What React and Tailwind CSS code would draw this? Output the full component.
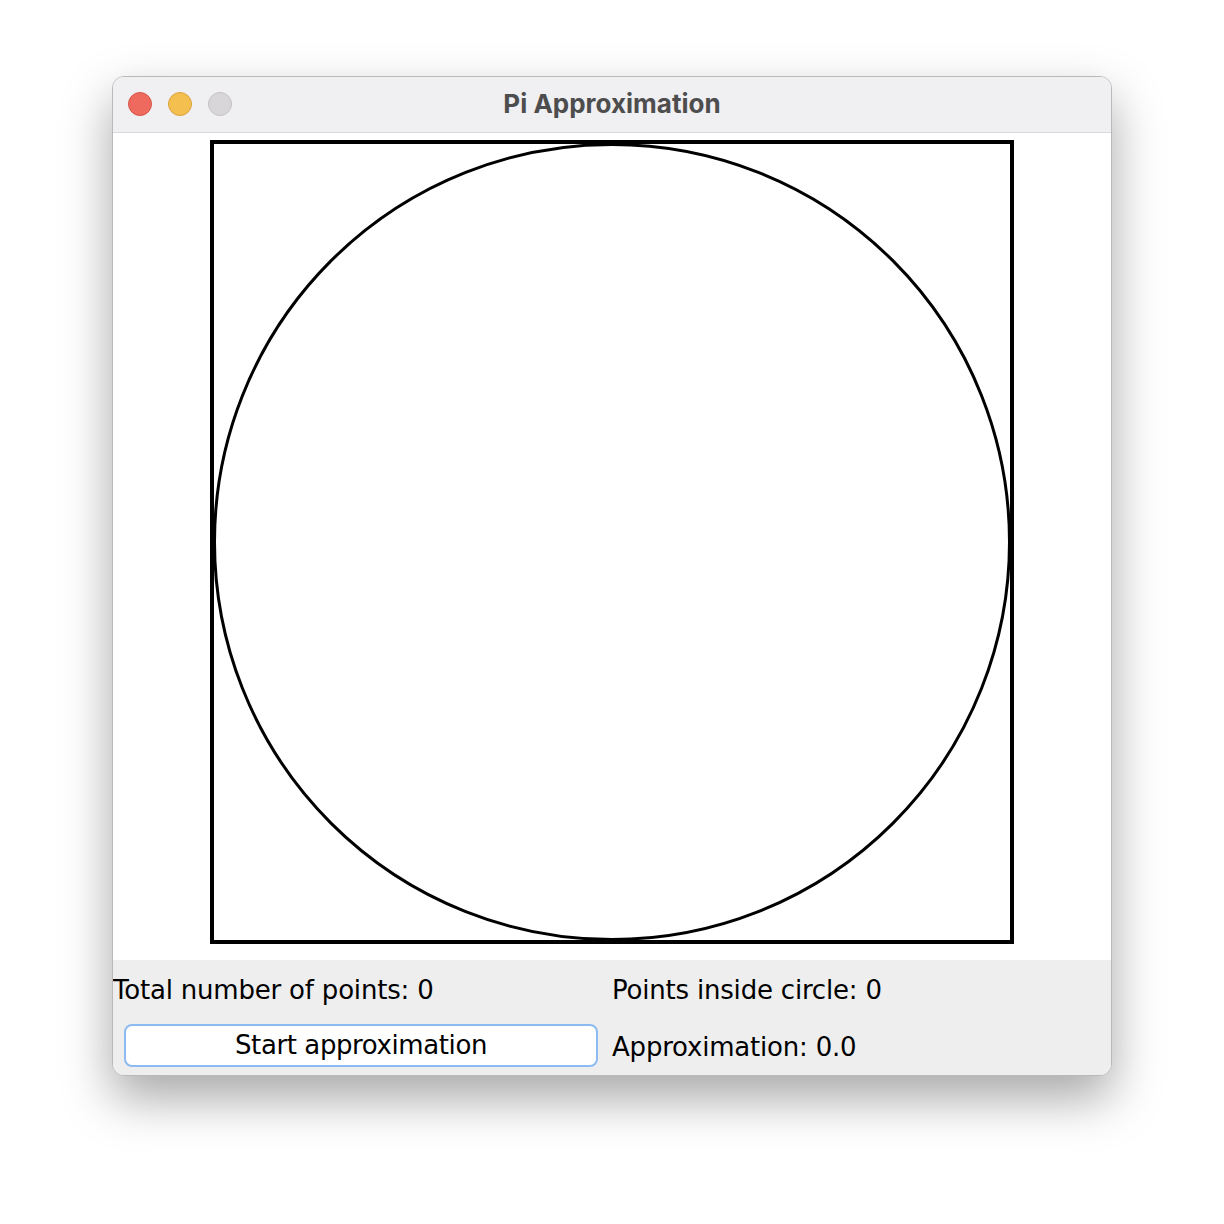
export default function App() {
  return (
    <div className="w-[1224px] h-[1224px] bg-white pl-[112px] pt-[76px]">
      <div className="w-[1000px] h-[1000px] rounded-[12px] overflow-hidden flex flex-col border border-[#b9b9b9] shadow-[0_22px_50px_rgba(0,0,0,0.35)] bg-white">
        <div className="h-[56px] shrink-0 bg-[#f0eff2] border-b border-[#d9d8db] relative flex items-center justify-center">
          <div className="absolute left-[15px] top-[15px] flex gap-[16px]">
            <div className="w-[24px] h-[24px] rounded-full bg-[#ee6a5f] border border-[#d65548]" />
            <div className="w-[24px] h-[24px] rounded-full bg-[#f5bf4f] border border-[#d9a43c]" />
            <div className="w-[24px] h-[24px] rounded-full bg-[#d8d6d9] border border-[#c3c1c4]" />
          </div>
          <span className="text-[26px] font-bold text-[#4d4d4d] leading-none pb-[1px]" style={{ fontFamily: '"Inter", "Roboto", sans-serif' }}>
            Pi Approximation
          </span>
        </div>
        <div className="h-[827px] shrink-0 bg-white">
          <svg width="998" height="827" viewBox="0 0 998 827">
            <rect x="99" y="9" width="800" height="800" fill="none" stroke="#000" strokeWidth="4" />
            <circle cx="499" cy="409" r="397.5" fill="none" stroke="#000" strokeWidth="3" />
          </svg>
        </div>
        <div className="flex-1 bg-[#eeeeee] grid grid-cols-2 text-[26px] tracking-[-0.2px] text-black" style={{ fontFamily: '"DejaVu Sans", "Liberation Sans", sans-serif' }}>
          <div className="h-[58px] flex items-center pt-[2px]">Total number of points: 0</div>
          <div className="h-[58px] flex items-center pt-[2px]">Points inside circle: 0</div>
          <div className="h-[58px] flex items-start pl-[11px] pt-[6px]">
            <div className="w-[474px] h-[43px] rounded-[8px] bg-white border-2 border-[#8dbbf1] flex items-center justify-center leading-none pb-[2px] tracking-[-0.4px]">
              Start approximation
            </div>
          </div>
          <div className="h-[58px] flex items-center">Approximation: 0.0</div>
        </div>
      </div>
    </div>
  );
}
